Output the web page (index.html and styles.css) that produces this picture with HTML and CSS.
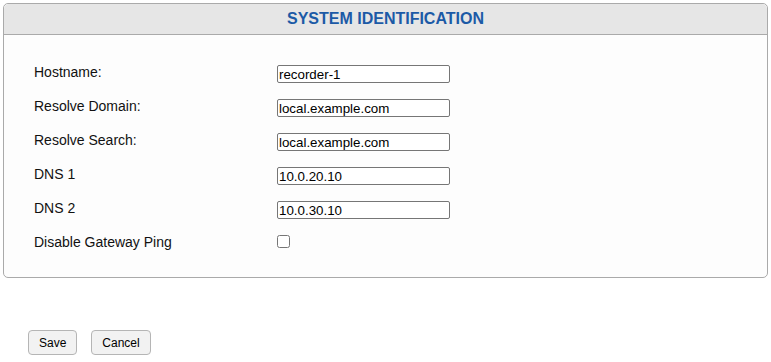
FILE: index.html
```html
<!DOCTYPE html>
<html lang="en">
<head>
    <meta charset="UTF-8">
    <title>System Identification</title>
    <link rel="stylesheet" href="styles.css">
</head>
<body>
    <div class="panel">
        <div class="panel-header">SYSTEM IDENTIFICATION</div>
        <form class="panel-body">
            <div class="row">
                <label>Hostname:</label>
                <input type="text" value="recorder-1">
            </div>
            <div class="row">
                <label>Resolve Domain:</label>
                <input type="text" value="local.example.com">
            </div>
            <div class="row">
                <label>Resolve Search:</label>
                <input type="text" value="local.example.com">
            </div>
            <div class="row">
                <label>DNS 1</label>
                <input type="text" value="10.0.20.10">
            </div>
            <div class="row">
                <label>DNS 2</label>
                <input type="text" value="10.0.30.10">
            </div>
            <div class="row row-check">
                <label>Disable Gateway Ping</label>
                <input type="checkbox" class="check">
            </div>
        </form>
    </div>
    <div class="actions">
        <button type="button">Save</button>
        <button type="button">Cancel</button>
    </div>
</body>
</html>
```

FILE: styles.css
```css
body {
    margin: 3px;
    font-family: "Liberation Sans", Arial, sans-serif;
    font-size: 14px;
    color: #111;
    background: #fff;
}
.panel {
    border: 1px solid #aaa;
    border-radius: 5px;
    background: #fdfdfd;
}
.panel-header {
    background: #e6e6e6;
    border-bottom: 1px solid #aaa;
    border-radius: 5px 5px 0 0;
    height: 30px;
    line-height: 30px;
    text-align: center;
    font-weight: bold;
    font-size: 16px;
    color: #1c5aa6;
}
.panel-body {
    padding: 30px 0 29px 30px;
}
.row {
    display: flex;
    align-items: center;
    margin-bottom: 16px;
    height: 18px;
}
.row label {
    width: 243px;
    margin-top: -4px;
}
.row-check {
    height: 13px;
    margin-bottom: 0;
}
.row-check label {
    margin-top: 0;
}
.row input[type="text"] {
    width: 173px;
    height: 18px;
    box-sizing: border-box;
    margin: 0;
    padding: 0 1px;
    border: 1px solid #767676;
    border-radius: 2px;
    font-family: "Liberation Sans", Arial, sans-serif;
    font-size: 13.33px;
    color: #000;
}
.check {
    width: 13px;
    height: 13px;
    margin: 0;
}
.actions {
    margin-top: 52px;
    padding-left: 25px;
    display: flex;
    gap: 14px;
}
.actions button {
    height: 25px;
    padding: 0 10px;
    font-family: "Liberation Sans", Arial, sans-serif;
    font-size: 12px;
    color: #000;
    background: #f2f2f2;
    border: 1px solid #b5b5b5;
    border-radius: 4px;
}
```
